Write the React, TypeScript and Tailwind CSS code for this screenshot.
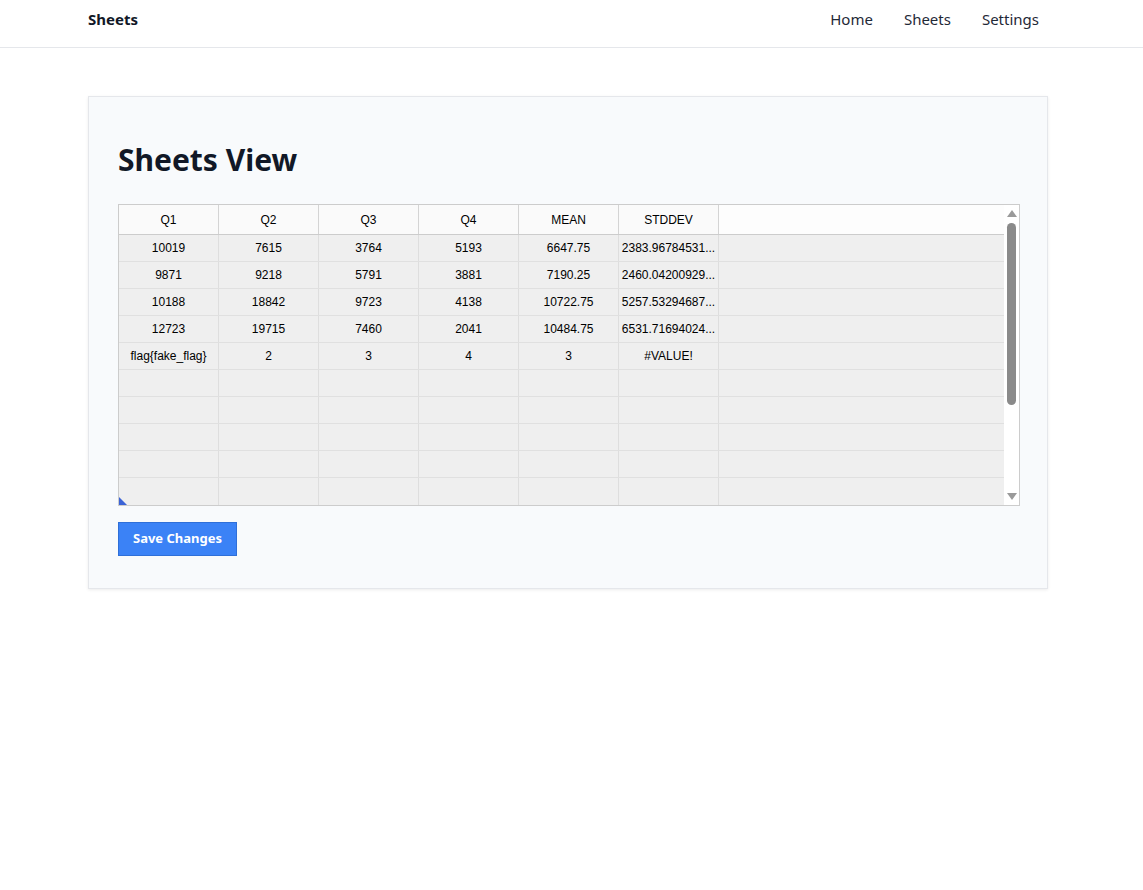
import React from "react";

const headers = ["Q1", "Q2", "Q3", "Q4", "MEAN", "STDDEV"];
const rows: string[][] = [
  ["10019", "7615", "3764", "5193", "6647.75", "2383.96784531..."],
  ["9871", "9218", "5791", "3881", "7190.25", "2460.04200929..."],
  ["10188", "18842", "9723", "4138", "10722.75", "5257.53294687..."],
  ["12723", "19715", "7460", "2041", "10484.75", "6531.71694024..."],
  ["flag{fake_flag}", "2", "3", "4", "3", "#VALUE!"],
  ["", "", "", "", "", ""],
  ["", "", "", "", "", ""],
  ["", "", "", "", "", ""],
  ["", "", "", "", "", ""],
  ["", "", "", "", "", ""],
];

const ui = { fontFamily: '"Segoe UI", "Noto Sans", "Open Sans", sans-serif' };
const grid = { fontFamily: '"Liberation Sans", Arial, sans-serif' };

export default function App() {
  return (
    <div className="min-h-screen bg-white" style={ui}>
      <nav className="h-[48px] border-b border-[#e5e7eb] bg-white">
        <div className="ml-[88px] w-[960px] h-[47px] pb-[8px] flex items-center justify-between">
          <span className="text-[15px] font-bold text-[#111827]">Sheets</span>
          <div className="flex items-center gap-[31px] mr-[9px] text-[15px] text-[#1f2937]">
            <span>Home</span>
            <span>Sheets</span>
            <span>Settings</span>
          </div>
        </div>
      </nav>
      <main className="ml-[88px] mt-[48px] w-[960px]">
        <div className="bg-[#f8fafc] border border-[#e5e7eb] shadow-[0_1px_3px_rgba(0,0,0,0.08)] px-[29px] pt-[44px] pb-[32px]">
          <h1 className="text-[30px] leading-[38px] font-bold text-[#111827] mb-[25px]">Sheets View</h1>
          <div className="relative flex w-[902px] h-[302px] border border-[#cccccc] bg-white" style={grid}>
            <div className="flex-1 flex flex-col">
              <div className="flex h-[30px] border-b border-[#cccccc] bg-[#fafafa] text-[12px] text-black">
                {headers.map((h) => (
                  <div key={h} className="w-[100px] shrink-0 border-r border-[#d4d4d4] flex items-center justify-center">
                    {h}
                  </div>
                ))}
                <div className="flex-1 bg-[#fdfdfd]" />
              </div>
              {rows.map((r, i) => (
                <div key={i} className={"flex h-[27px] bg-[#efefef] text-[12px] text-black" + (i < rows.length - 1 ? " border-b border-[#e0e0e0]" : "")}>
                  {r.map((c, j) => (
                    <div key={j} className="w-[100px] shrink-0 border-r border-[#dedede] flex items-center justify-center whitespace-nowrap overflow-hidden">
                      {c}
                    </div>
                  ))}
                  <div className="flex-1" />
                </div>
              ))}
            </div>
            <div className="w-[15px] bg-white flex flex-col items-center">
              <div className="mt-[5px] w-0 h-0 border-l-[5px] border-r-[5px] border-b-[7px] border-l-transparent border-r-transparent border-b-[#9a9a9a]" />
              <div className="mt-[6px] w-[9px] h-[182px] rounded-full bg-[#8a8a8a]" />
              <div className="flex-1" />
              <div className="mb-[5px] w-0 h-0 border-l-[5px] border-r-[5px] border-t-[7px] border-l-transparent border-r-transparent border-t-[#9a9a9a]" />
            </div>
            <div className="absolute left-0 bottom-0 w-0 h-0 border-b-[8px] border-r-[8px] border-b-[#3b63d6] border-r-transparent" />
          </div>
          <button className="mt-[16px] h-[34px] px-[14px] bg-[#3b82f6] border border-[#2f6fd8] text-white text-[13px] font-bold">
            Save Changes
          </button>
        </div>
      </main>
    </div>
  );
}
